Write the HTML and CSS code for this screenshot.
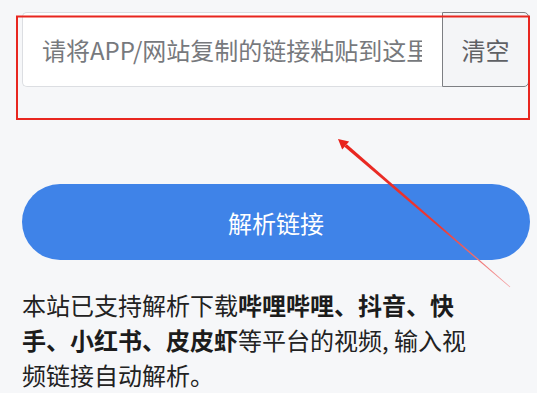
FILE: index.html
```html
<!DOCTYPE html>
<html lang="zh-CN">
<head>
<meta charset="utf-8">
<title>视频解析</title>
<link rel="stylesheet" href="styles.css">
</head>
<body>
<main class="page">
  <div class="input-group">
    <input class="url-input" type="text" placeholder="请将APP/网站复制的链接粘贴到这里">
    <button class="clear-btn" type="button">清空</button>
  </div>
  <button class="parse-btn" type="button">解析链接</button>
  <p class="intro">本站已支持解析下载<b>哔哩哔哩、抖音、快手、小红书、皮皮虾</b>等平台的视频, 输入视频链接自动解析。</p>
</main>
<svg class="annotation" width="537" height="393" viewBox="0 0 537 393" aria-hidden="true">
  <defs>
    <linearGradient id="fade" x1="338" y1="139" x2="510" y2="287" gradientUnits="userSpaceOnUse">
      <stop offset="0" stop-color="#e8231c"/>
      <stop offset="0.6" stop-color="#ec3a35"/>
      <stop offset="1" stop-color="#f4a6a8"/>
    </linearGradient>
  </defs>
  <rect x="17" y="16.5" width="512" height="102.5" fill="none" stroke="#e8261f" stroke-width="2"/>
  <polygon points="344.4,146.8 346.8,144.2 510.3,286.8 509.8,287.3" fill="url(#fade)"/>
  <polygon points="338,139 342.2,149.6 349.1,141.6" fill="#e8231c"/>
</svg>
</body>
</html>
```
FILE: styles.css
```css
html, body {
  margin: 0;
  padding: 0;
  background: #f6f7f9;
}

body {
  font-family: "Noto Sans CJK SC", "Noto Sans", sans-serif;
  width: 537px;
  height: 393px;
  overflow: hidden;
  position: relative;
}

.page {
  padding: 12px 8px 0 22px;
  display: flex;
  flex-direction: column;
}

.input-group {
  display: flex;
  height: 75px;
}

.url-input {
  flex: 1;
  min-width: 0;
  box-sizing: border-box;
  height: 75px;
  margin: 0;
  padding: 0 20px 0 19px;
  border: 1px solid #dcdee2;
  border-right: none;
  border-radius: 5px 0 0 5px;
  background: #fff;
  font-family: inherit;
  font-size: 24px;
  color: #333;
  outline: none;
}

.url-input::placeholder {
  color: #77797d;
}

.clear-btn {
  width: 87px;
  box-sizing: border-box;
  height: 75px;
  margin: 0;
  padding: 0;
  border: 1px solid #7d7f83;
  border-radius: 0 5px 5px 0;
  background: #f4f5f7;
  font-family: inherit;
  font-size: 24px;
  color: #5f6165;
}

.parse-btn {
  margin: 97px 0 0 0;
  height: 76px;
  width: 508px;
  border: none;
  border-radius: 38px;
  background: #3f83e8;
  color: #fff;
  font-family: inherit;
  font-size: 24px;
  padding: 0;
}

.intro {
  margin: 27px 0 0 0;
  width: 452px;
  font-size: 24px;
  line-height: 35px;
  color: #222;
}

.intro b {
  font-weight: 700;
  color: #1c1c1c;
}

.annotation {
  position: absolute;
  left: 0;
  top: 0;
  pointer-events: none;
}
```
